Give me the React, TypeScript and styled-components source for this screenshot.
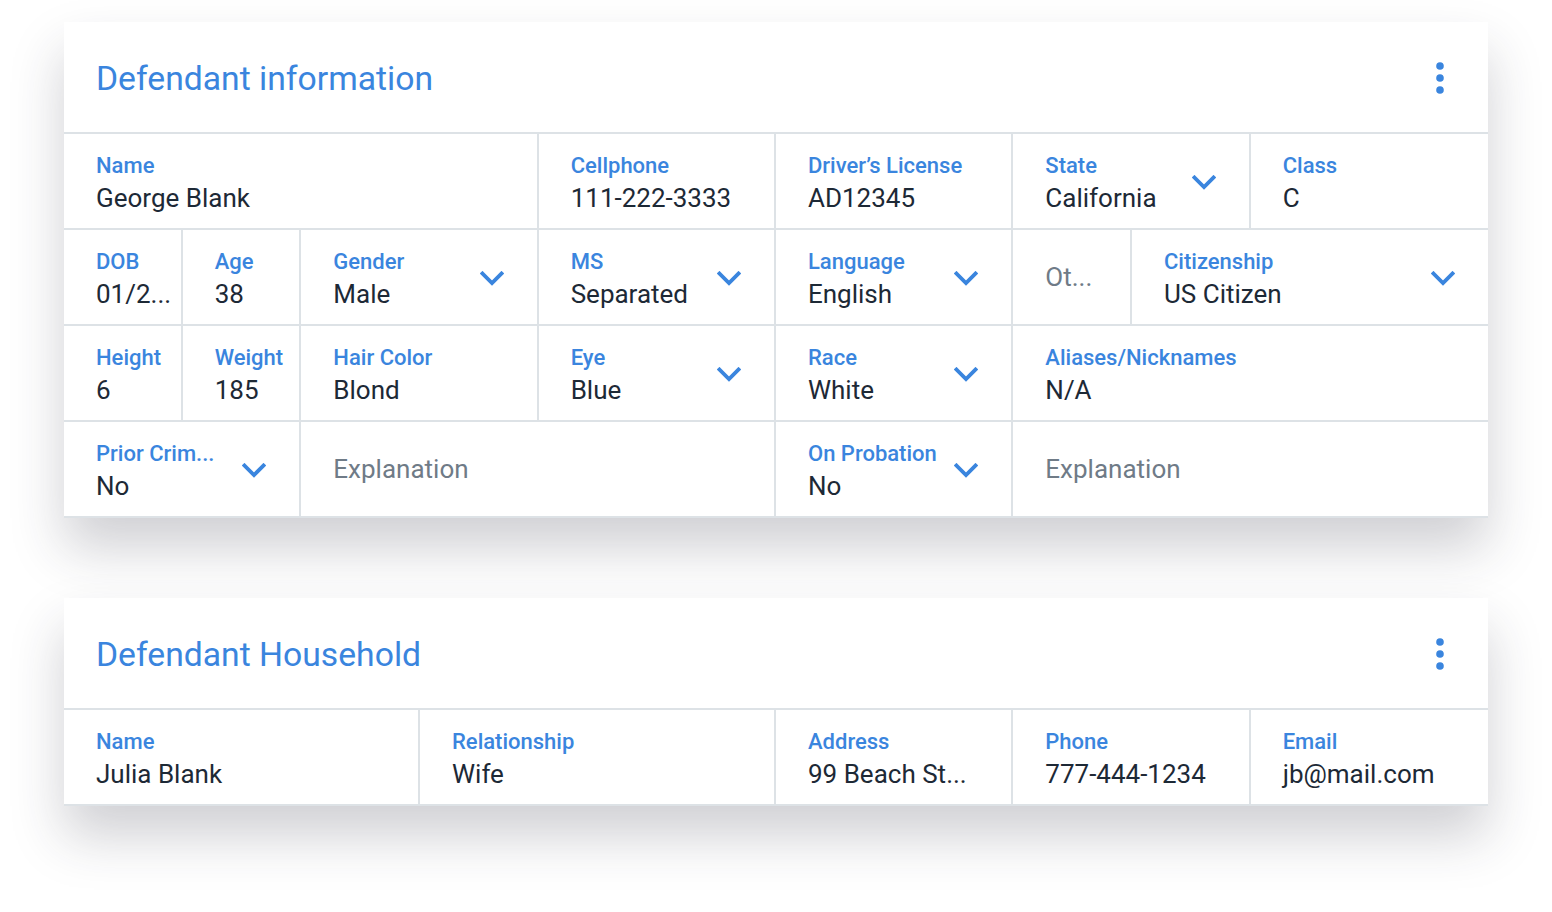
import React from "react";
import styled, { createGlobalStyle } from "styled-components";

const GlobalStyle = createGlobalStyle`
  html, body {
    margin: 0;
    padding: 0;
    background: #ffffff;
  }
  body {
    font-family: Roboto, "Noto Sans", "Liberation Sans", sans-serif;
    -webkit-font-smoothing: antialiased;
  }
`;

const Page = styled.div`
  display: flex;
  flex-direction: column;
  gap: 80px;
  padding: 22px 64px 110px;
  width: 1424px;
`;

const Card = styled.section`
  background: #ffffff;
  box-shadow: 0 30px 50px rgba(40, 40, 60, 0.22);
`;

const Header = styled.header`
  box-sizing: border-box;
  height: 112px;
  display: flex;
  align-items: center;
  justify-content: space-between;
  padding: 2px 44px 0 32px;
  border-bottom: 2px solid #dde2e6;
`;

const Title = styled.h2`
  margin: 0;
  font-size: 33.7px;
  font-weight: 400;
  color: #3a85de;
`;

const MenuButton = styled.button`
  display: flex;
  align-items: center;
  justify-content: center;
  padding: 0;
  border: none;
  background: transparent;
  cursor: pointer;
`;

const Grid = styled.div`
  display: grid;
  grid-template-columns: repeat(12, 1fr);
`;

const Cell = styled.div<{ $span: number; $last?: boolean; $tight?: boolean }>`
  grid-column: span ${(p) => p.$span};
  box-sizing: border-box;
  height: 96px;
  display: flex;
  align-items: center;
  gap: 12px;
  padding: 0 ${(p) => (p.$tight ? "8px" : "33px")} 0 32px;
  border-bottom: 2px solid #dde2e6;
  border-right: ${(p) => (p.$last ? "none" : "2px solid #dde2e6")};
  overflow: hidden;
`;

const FieldText = styled.div`
  flex: 1;
  min-width: 0;
  display: flex;
  flex-direction: column;
  gap: 3px;
  padding-top: 5px;
`;

const Label = styled.span`
  font-size: 22px;
  line-height: 26px;
  font-weight: 500;
  color: #3a85de;
  white-space: nowrap;
`;

const Value = styled.span`
  font-size: 26px;
  line-height: 32px;
  font-weight: 400;
  color: #1d2936;
  white-space: nowrap;
`;

const Placeholder = styled.span`
  flex: 1;
  font-size: 26px;
  line-height: 32px;
  color: #6f7b87;
  white-space: nowrap;
`;

const Chevron = styled.svg`
  flex: none;
  width: 24px;
  height: 15px;
  margin-top: 3px;
`;

function ChevronDown() {
  return (
    <Chevron viewBox="0 0 24 15" fill="none">
      <path d="M2.5 2.5 L12 12 L21.5 2.5" stroke="#3a85de" strokeWidth="3.8" strokeLinecap="square" />
    </Chevron>
  );
}

function MoreVert() {
  return (
    <svg width="8" height="32" viewBox="0 0 8 32">
      <circle cx="4" cy="4" r="3.8" fill="#3a85de" />
      <circle cx="4" cy="16" r="3.8" fill="#3a85de" />
      <circle cx="4" cy="28" r="3.8" fill="#3a85de" />
    </svg>
  );
}

type Field = {
  span: number;
  label?: string;
  value?: string;
  placeholder?: string;
  select?: boolean;
  last?: boolean;
  tight?: boolean;
};

const info: Field[] = [
  { span: 4, label: "Name", value: "George Blank" },
  { span: 2, label: "Cellphone", value: "111-222-3333" },
  { span: 2, label: "Driver’s License", value: "AD12345" },
  { span: 2, label: "State", value: "California", select: true },
  { span: 2, label: "Class", value: "C", last: true },

  { span: 1, label: "DOB", value: "01/2...", tight: true },
  { span: 1, label: "Age", value: "38", tight: true },
  { span: 2, label: "Gender", value: "Male", select: true },
  { span: 2, label: "MS", value: "Separated", select: true },
  { span: 2, label: "Language", value: "English", select: true },
  { span: 1, placeholder: "Ot...", tight: true },
  { span: 3, label: "Citizenship", value: "US Citizen", select: true, last: true },

  { span: 1, label: "Height", value: "6", tight: true },
  { span: 1, label: "Weight", value: "185", tight: true },
  { span: 2, label: "Hair Color", value: "Blond" },
  { span: 2, label: "Eye", value: "Blue", select: true },
  { span: 2, label: "Race", value: "White", select: true },
  { span: 4, label: "Aliases/Nicknames", value: "N/A", last: true },

  { span: 2, label: "Prior Crim...", value: "No", select: true },
  { span: 4, placeholder: "Explanation" },
  { span: 2, label: "On Probation", value: "No", select: true },
  { span: 4, placeholder: "Explanation", last: true },
];

const household: Field[] = [
  { span: 3, label: "Name", value: "Julia Blank" },
  { span: 3, label: "Relationship", value: "Wife" },
  { span: 2, label: "Address", value: "99 Beach St..." },
  { span: 2, label: "Phone", value: "777-444-1234" },
  { span: 2, label: "Email", value: "jb@mail.com", last: true },
];

function FormCard({ title, fields }: { title: string; fields: Field[] }) {
  return (
    <Card>
      <Header>
        <Title>{title}</Title>
        <MenuButton aria-label="More">
          <MoreVert />
        </MenuButton>
      </Header>
      <Grid>
        {fields.map((f, i) => (
          <Cell key={i} $span={f.span} $last={f.last} $tight={f.tight}>
            {f.placeholder ? (
              <Placeholder>{f.placeholder}</Placeholder>
            ) : (
              <FieldText>
                <Label>{f.label}</Label>
                <Value>{f.value}</Value>
              </FieldText>
            )}
            {f.select && <ChevronDown />}
          </Cell>
        ))}
      </Grid>
    </Card>
  );
}

export default function App() {
  return (
    <>
      <GlobalStyle />
      <Page>
        <FormCard title="Defendant information" fields={info} />
        <FormCard title="Defendant Household" fields={household} />
      </Page>
    </>
  );
}
